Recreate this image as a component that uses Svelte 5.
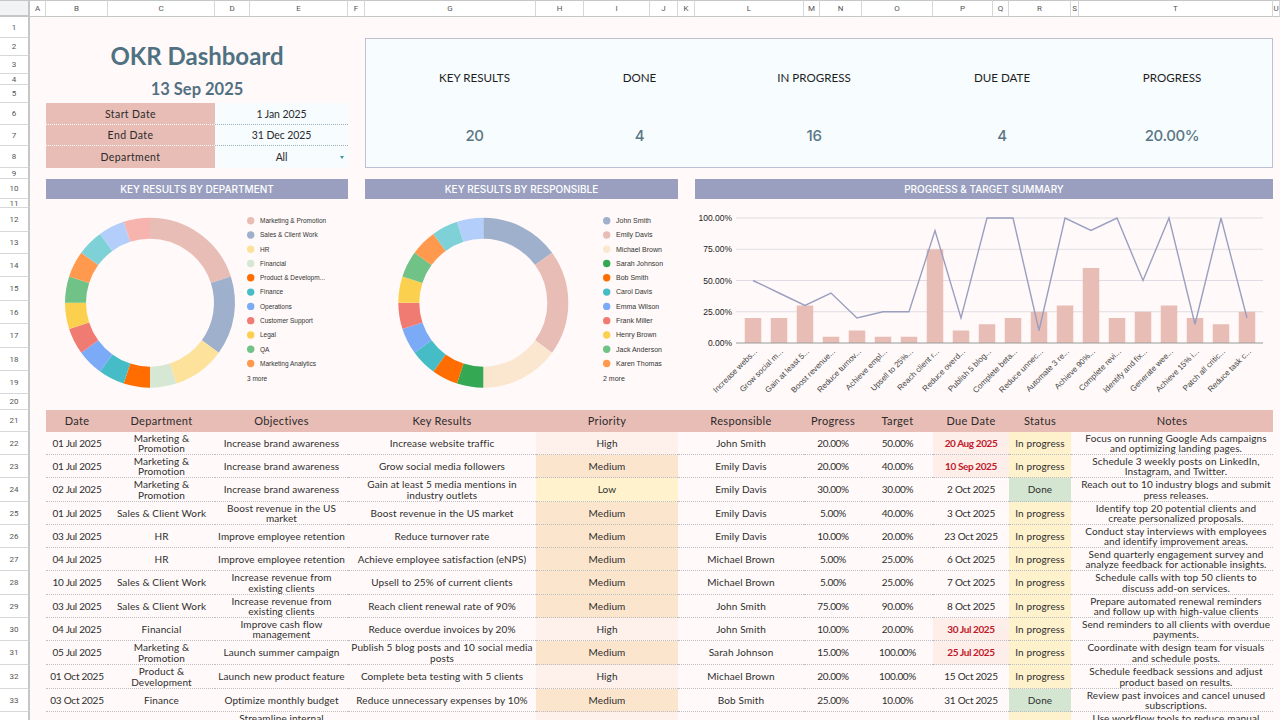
<script>
	const colWidths = [16, 62, 107, 35, 98, 17, 171, 48, 66, 28, 17, 109, 16, 42, 71, 60, 16, 62, 8, 194, 7]
	const colNames = 'ABCDEFGHIJKLMNOPQRSTU'.split('')
	const rowHeights = [21, 18, 18, 11, 18, 22, 21, 22, 11, 20, 9, 24, 22, 23, 24, 23, 24, 23, 23, 16, 22, 23, 23, 24, 23, 23, 23, 24, 23, 23, 24, 24, 23, 23]

	const stats = [
		['KEY RESULTS', '20'],
		['DONE', '4'],
		['IN PROGRESS', '16'],
		['DUE DATE', '4'],
		['PROGRESS', '20.00%']
	]

	const deptSlices = [
		[4, '#e8bdb6', 'Marketing & Promotion'],
		[3, '#9fb0cc', 'Sales & Client Work'],
		[2, '#fce29b', 'HR'],
		[1, '#d6e8d4', 'Financial'],
		[1, '#ff6d01', 'Product & Developm...'],
		[1, '#46bdc6', 'Finance'],
		[1, '#7baaf7', 'Operations'],
		[1, '#f07b72', 'Customer Support'],
		[1, '#fcd04f', 'Legal'],
		[1, '#71c287', 'QA'],
		[1, '#ff994d', 'Marketing Analytics'],
		[1, '#7ed1d7'],
		[1, '#b3cefb'],
		[1, '#f7b4ae']
	]
	const respSlices = [
		[3, '#9fb0cc', 'John Smith'],
		[4, '#e8bdb6', 'Emily Davis'],
		[3, '#fbe6d0', 'Michael Brown'],
		[1, '#34a853', 'Sarah Johnson'],
		[1, '#ff6d01', 'Bob Smith'],
		[1, '#46bdc6', 'Carol Davis'],
		[1, '#7baaf7', 'Emma Wilson'],
		[1, '#f07b72', 'Frank Miller'],
		[1, '#fcd04f', 'Henry Brown'],
		[1, '#71c287', 'Jack Anderson'],
		[1, '#ff994d', 'Karen Thomas'],
		[1, '#7ed1d7'],
		[1, '#b3cefb']
	]

	function arcs(slices, cx, cy, r) {
		let total = slices.reduce((s, x) => s + x[0], 0)
		let at = 0
		return slices.map((s) => {
			let a0 = (at / total) * Math.PI * 2
			at += s[0]
			let a1 = (at / total) * Math.PI * 2
			let x0 = cx + r * Math.sin(a0)
			let y0 = cy - r * Math.cos(a0)
			let x1 = cx + r * Math.sin(a1)
			let y1 = cy - r * Math.cos(a1)
			return { color: s[1], d: `M${x0} ${y0}A${r} ${r} 0 0 1 ${x1} ${y1}` }
		})
	}

	const chartLabels = ['Increase webs...', 'Grow social m...', 'Gain at least 5...', 'Boost revenue...', 'Reduce turnov...', 'Achieve empl...', 'Upsell to 25%...', 'Reach client r...', 'Reduce overd...', 'Publish 5 blog...', 'Complete beta...', 'Reduce unnec...', 'Automate 3 re...', 'Achieve 90%...', 'Complete revi...', 'Identify and fix...', 'Generate wee...', 'Achieve 15% i...', 'Patch all critic...', 'Reduce task c...']
	const progress = [20, 20, 30, 5, 10, 5, 5, 75, 10, 15, 20, 25, 30, 60, 20, 25, 30, 20, 15, 25]
	const target = [50, 40, 30, 40, 20, 25, 25, 90, 20, 100, 100, 10, 100, 90, 100, 50, 100, 15, 100, 20]
	const barX = (i) => 753 + 26 * i
	const valY = (v) => 343 - v * 1.25
	const linePoints = target.map((v, i) => `${barX(i)},${valY(v)}`).join(' ')

	const headers = ['Date', 'Department', 'Objectives', 'Key Results', 'Priority', 'Responsible', 'Progress', 'Target', 'Due Date', 'Status', 'Notes']
	const spans = [1, 1, 2, 2, 3, 2, 2, 1, 2, 1, 2]

	const rows = [
		['01 Jul 2025', 'Marketing &\nPromotion', 'Increase brand awareness', 'Increase website traffic', 'High', 'John Smith', '20.00%', '50.00%', '20 Aug 2025', 'In progress', 'Focus on running Google Ads campaigns\nand optimizing landing pages.', true],
		['01 Jul 2025', 'Marketing &\nPromotion', 'Increase brand awareness', 'Grow social media followers', 'Medium', 'Emily Davis', '20.00%', '40.00%', '10 Sep 2025', 'In progress', 'Schedule 3 weekly posts on LinkedIn,\nInstagram, and Twitter.', true],
		['02 Jul 2025', 'Marketing &\nPromotion', 'Increase brand awareness', 'Gain at least 5 media mentions in\nindustry outlets', 'Low', 'Emily Davis', '30.00%', '30.00%', '2 Oct 2025', 'Done', 'Reach out to 10 industry blogs and submit\npress releases.'],
		['01 Jul 2025', 'Sales & Client Work', 'Boost revenue in the US\nmarket', 'Boost revenue in the US market', 'Medium', 'Emily Davis', '5.00%', '40.00%', '3 Oct 2025', 'In progress', 'Identify top 20 potential clients and\ncreate personalized proposals.'],
		['03 Jul 2025', 'HR', 'Improve employee retention', 'Reduce turnover rate', 'Medium', 'Emily Davis', '10.00%', '20.00%', '23 Oct 2025', 'In progress', 'Conduct stay interviews with employees\nand identify improvement areas.'],
		['04 Jul 2025', 'HR', 'Improve employee retention', 'Achieve employee satisfaction (eNPS)', 'Medium', 'Michael Brown', '5.00%', '25.00%', '6 Oct 2025', 'In progress', 'Send quarterly engagement survey and\nanalyze feedback for actionable insights.'],
		['10 Jul 2025', 'Sales & Client Work', 'Increase revenue from\nexisting clients', 'Upsell to 25% of current clients', 'Medium', 'Michael Brown', '5.00%', '25.00%', '7 Oct 2025', 'In progress', 'Schedule calls with top 50 clients to\ndiscuss add-on services.'],
		['03 Jul 2025', 'Sales & Client Work', 'Increase revenue from\nexisting clients', 'Reach client renewal rate of 90%', 'Medium', 'John Smith', '75.00%', '90.00%', '8 Oct 2025', 'In progress', 'Prepare automated renewal reminders\nand follow up with high-value clients'],
		['04 Jul 2025', 'Financial', 'Improve cash flow\nmanagement', 'Reduce overdue invoices by 20%', 'High', 'John Smith', '10.00%', '20.00%', '30 Jul 2025', 'In progress', 'Send reminders to all clients with overdue\npayments.', true],
		['05 Jul 2025', 'Marketing &\nPromotion', 'Launch summer campaign', 'Publish 5 blog posts and 10 social media\nposts', 'Medium', 'Sarah Johnson', '15.00%', '100.00%', '25 Jul 2025', 'In progress', 'Coordinate with design team for visuals\nand schedule posts.', true],
		['01 Oct 2025', 'Product &\nDevelopment', 'Launch new product feature', 'Complete beta testing with 5 clients', 'High', 'Michael Brown', '20.00%', '100.00%', '15 Oct 2025', 'In progress', 'Schedule feedback sessions and adjust\nproduct based on results.'],
		['03 Oct 2025', 'Finance', 'Optimize monthly budget', 'Reduce unnecessary expenses by 10%', 'Medium', 'Bob Smith', '25.00%', '10.00%', '31 Oct 2025', 'Done', 'Review past invoices and cancel unused\nsubscriptions.'],
		['04 Oct 2025', 'Operations', 'Streamline internal\nprocesses', 'Automate 3 recurring tasks', 'High', 'Carol Davis', '30.00%', '100.00%', '15 Oct 2025', 'In progress', 'Use workflow tools to reduce manual\nwork.']
	]
</script>

<div class="sheet" style="grid-template-columns: 30px {colWidths.map((w) => w + 'px').join(' ')}; grid-template-rows: 17px {rowHeights.map((h) => h + 'px').join(' ')};">
	<div class="corner"></div>
	{#each colNames as name}
		<div class="col-head">{name}</div>
	{/each}
	{#each rowHeights as h, i}
		<div class="row-head" style="grid-row: {i + 2};">{i + 1}</div>
	{/each}

	<div class="title">OKR Dashboard</div>
	<div class="today">13 Sep 2025</div>

	<div class="filters">
		<div class="f-label">Start Date</div>
		<div class="f-value">1 Jan 2025</div>
		<div class="f-label">End Date</div>
		<div class="f-value">31 Dec 2025</div>
		<div class="f-label last">Department</div>
		<div class="f-value last">All<span class="arrow"></span></div>
	</div>

	<div class="stats">
		{#each stats as s, i}
			<div class="stat s{i}">
				<div class="stat-label">{s[0]}</div>
				<div class="stat-value">{s[1]}</div>
			</div>
		{/each}
	</div>

	<div class="bar b1">KEY RESULTS BY DEPARTMENT</div>
	<div class="bar b2">KEY RESULTS BY RESPONSIBLE</div>
	<div class="bar b3">PROGRESS &amp; TARGET SUMMARY</div>

	<svg class="chart c1" viewBox="46 208 302 202">
		{#each arcs(deptSlices, 150, 302.7, 74.5) as a}
			<path d={a.d} stroke={a.color} stroke-width="21" fill="none" />
		{/each}
		{#each deptSlices.slice(0, 11) as s, i}
			<circle cx="250.7" cy={220.7 + i * 14.28} r="3.7" fill={s[1]} />
			<text class="small" x="260" y={223 + i * 14.28}>{s[2]}</text>
		{/each}
		<text class="small" x="247" y="380.5">3 more</text>
	</svg>

	<svg class="chart c2" viewBox="365 208 313 202">
		{#each arcs(respSlices, 483.3, 302.7, 74.5) as a}
			<path d={a.d} stroke={a.color} stroke-width="21" fill="none" />
		{/each}
		{#each respSlices.slice(0, 11) as s, i}
			<circle cx="606.7" cy={220.7 + i * 14.28} r="3.7" fill={s[1]} />
			<text x="616" y={223 + i * 14.28}>{s[2]}</text>
		{/each}
		<text x="603" y="380.5">2 more</text>
	</svg>

	<svg class="chart c3" viewBox="695 208 578 202">
		{#each [100, 75, 50, 25] as v}
			<line x1="736" x2="1263" y1={valY(v)} y2={valY(v)} stroke="#dfdde3" />
			<text class="tick" x="732" y={valY(v) + 3}>{v}.00%</text>
		{/each}
		<text class="tick" x="732" y="346">0.00%</text>
		{#each progress as v, i}
			<rect x={barX(i) - 8.25} y={valY(v)} width="16.5" height={v * 1.25} fill="#e8bdb6" />
		{/each}
		<line x1="736" x2="1263" y1="343" y2="343" stroke="#9a9a9a" />
		<polyline points={linePoints} fill="none" stroke="#9a9fc0" stroke-width="1.4" />
		{#each chartLabels as label, i}
			<text class="cat" transform="translate({barX(i) + 4.5} 352) rotate(-45)">{label}</text>
		{/each}
	</svg>

	<div class="table">
		{#each headers as h, i}
			<div class="th" style="grid-column: span {spans[i]};">{h}</div>
		{/each}
		{#each rows as r}
			<div class="td date">{r[0]}</div>
			<div class="td">{r[1]}</div>
			<div class="td span2">{r[2]}</div>
			<div class="td span2">{r[3]}</div>
			<div class="td span3 p-{r[4].toLowerCase()}">{r[4]}</div>
			<div class="td span2">{r[5]}</div>
			<div class="td span2 num">{r[6]}</div>
			<div class="td num">{r[7]}</div>
			<div class="td span2 date" class:overdue={r[11]}>{r[8]}</div>
			<div class="td" class:done={r[9] === 'Done'} class:open={r[9] !== 'Done'}>{r[9]}</div>
			<div class="td span2 notes">{r[10]}</div>
		{/each}
	</div>
</div>

<style>
	:global(body) {
		background: #fffaf9;
		overflow: hidden;
	}
	.sheet {
		display: grid;
		height: 720px;
		overflow: hidden;
		background: #fffaf9;
		font-family: Lato, sans-serif;
		color: #2b2b2b;
	}
	.corner {
		background: #f1f3f4;
		border-top: 1px solid #c4c7c5;
		border-right: 2px solid #c4c7c5;
		border-bottom: 2px solid #c4c7c5;
	}
	.col-head {
		background: #fff;
		border-top: 1px solid #c4c7c5;
		border-right: 1px solid #d5d7d8;
		border-bottom: 1px solid #c4c7c5;
		font: 8px Roboto, sans-serif;
		color: #555;
		display: flex;
		align-items: center;
		justify-content: center;
	}
	.row-head {
		grid-column: 1;
		background: #fff;
		border-right: 2px solid #c4c7c5;
		border-bottom: 1px solid #d5d7d8;
		font: 8px Roboto, sans-serif;
		color: #555;
		display: flex;
		align-items: center;
		justify-content: center;
	}

	.title {
		grid-column: 3 / 7;
		grid-row: 3 / 5;
		display: flex;
		align-items: center;
		justify-content: center;
		padding-bottom: 2px;
		font-size: 24px;
		font-weight: 700;
		color: #4f7182;
	}
	.today {
		grid-column: 3 / 7;
		grid-row: 5 / 7;
		display: flex;
		align-items: center;
		justify-content: center;
		font-size: 16.5px;
		font-weight: 700;
		color: #527082;
	}

	.filters {
		grid-column: 3 / 7;
		grid-row: 7 / 10;
		display: grid;
		grid-template-columns: subgrid;
		grid-template-rows: subgrid;
		font-size: 10.5px;
		letter-spacing: 0.4px;
	}
	.f-label,
	.f-value {
		grid-column: span 2;
		display: flex;
		align-items: center;
		justify-content: center;
		position: relative;
	}
	.f-label {
		background: #e8bdb6;
		border-bottom: 1px dotted #fff;
	}
	.f-value {
		background: #f7fcff;
		border-bottom: 1px dotted #9fb0bd;
		letter-spacing: -0.1px;
	}
	.last {
		border-bottom: none;
	}
	.arrow {
		position: absolute;
		right: 4px;
		top: 10px;
		border-left: 2.5px solid transparent;
		border-right: 2.5px solid transparent;
		border-top: 3px solid #3f97a5;
	}

	.stats {
		grid-column: 8 / 22;
		grid-row: 3 / 10;
		display: grid;
		grid-template-columns: subgrid;
		background: #f7fcff;
		outline: 1.5px solid #bcc0d2;
		outline-offset: -1px;
	}
	.stat {
		display: flex;
		flex-direction: column;
		align-items: center;
	}
	.s0 { grid-column: span 2; }
	.s1 { grid-column: span 3; }
	.s2 { grid-column: span 4; }
	.s3 { grid-column: span 3; }
	.s4 { grid-column: span 2; }
	.stat-label {
		margin-top: 31px;
		font: 400 11.6px/18px Lato, sans-serif;
		color: #1d1d1d;
	}
	.stat-value {
		margin-top: 37px;
		font: 500 15px/24px Inter, sans-serif;
		letter-spacing: -0.4px;
		color: #5a7684;
	}

	.bar {
		grid-row: 11;
		display: flex;
		align-items: center;
		justify-content: center;
		background: #9a9fc0;
		color: #fff;
		font: 500 10px Inter, sans-serif;
	}
	.b1 { grid-column: 3 / 7; }
	.b2 { grid-column: 8 / 12; }
	.b3 { grid-column: 13 / 22; }

	.chart {
		grid-row: 13 / 22;
		width: 100%;
		height: 100%;
		display: block;
	}
	.c1 { grid-column: 3 / 7; }
	.c2 { grid-column: 8 / 12; }
	.c3 { grid-column: 13 / 22; }
	.chart text {
		font: 7px "Liberation Sans", sans-serif;
		fill: #333;
	}
	.chart text.small {
		font-size: 6.5px;
	}
	.chart text.tick {
		font-size: 8.5px;
		text-anchor: end;
		fill: #222;
	}
	.chart text.cat {
		font-size: 8px;
		text-anchor: end;
		fill: #444;
	}

	.table {
		grid-column: 3 / 22;
		grid-row: 22 / 36;
		display: grid;
		grid-template-columns: subgrid;
		grid-template-rows: subgrid;
		font-size: 10px;
		line-height: 10.5px;
		letter-spacing: 0.12px;
		text-align: center;
	}
	.th {
		background: #e8bdb6;
		display: flex;
		align-items: center;
		justify-content: center;
		font-size: 11px;
		letter-spacing: 0.35px;
	}
	.td {
		display: flex;
		align-items: center;
		justify-content: center;
		border-bottom: 1px dotted #bdbdc4;
		color: #2e2e2e;
		min-width: 0;
		white-space: pre;
	}
	.date {
		letter-spacing: -0.25px;
	}
	.num {
		letter-spacing: -0.35px;
	}
	.span2 { grid-column: span 2; }
	.span3 { grid-column: span 3; }
	.p-high { background: #fef1ec; }
	.p-medium { background: #fbe5cd; }
	.p-low { background: #fff2cc; }
	.overdue {
		background: #fdeee9;
		color: #c0182a;
		font-weight: 700;
		letter-spacing: -0.4px;
	}
	.open { background: #fef2cd; }
	.done { background: #d4e6d2; }
	.notes {
		padding-left: 8px;
	}
</style>
